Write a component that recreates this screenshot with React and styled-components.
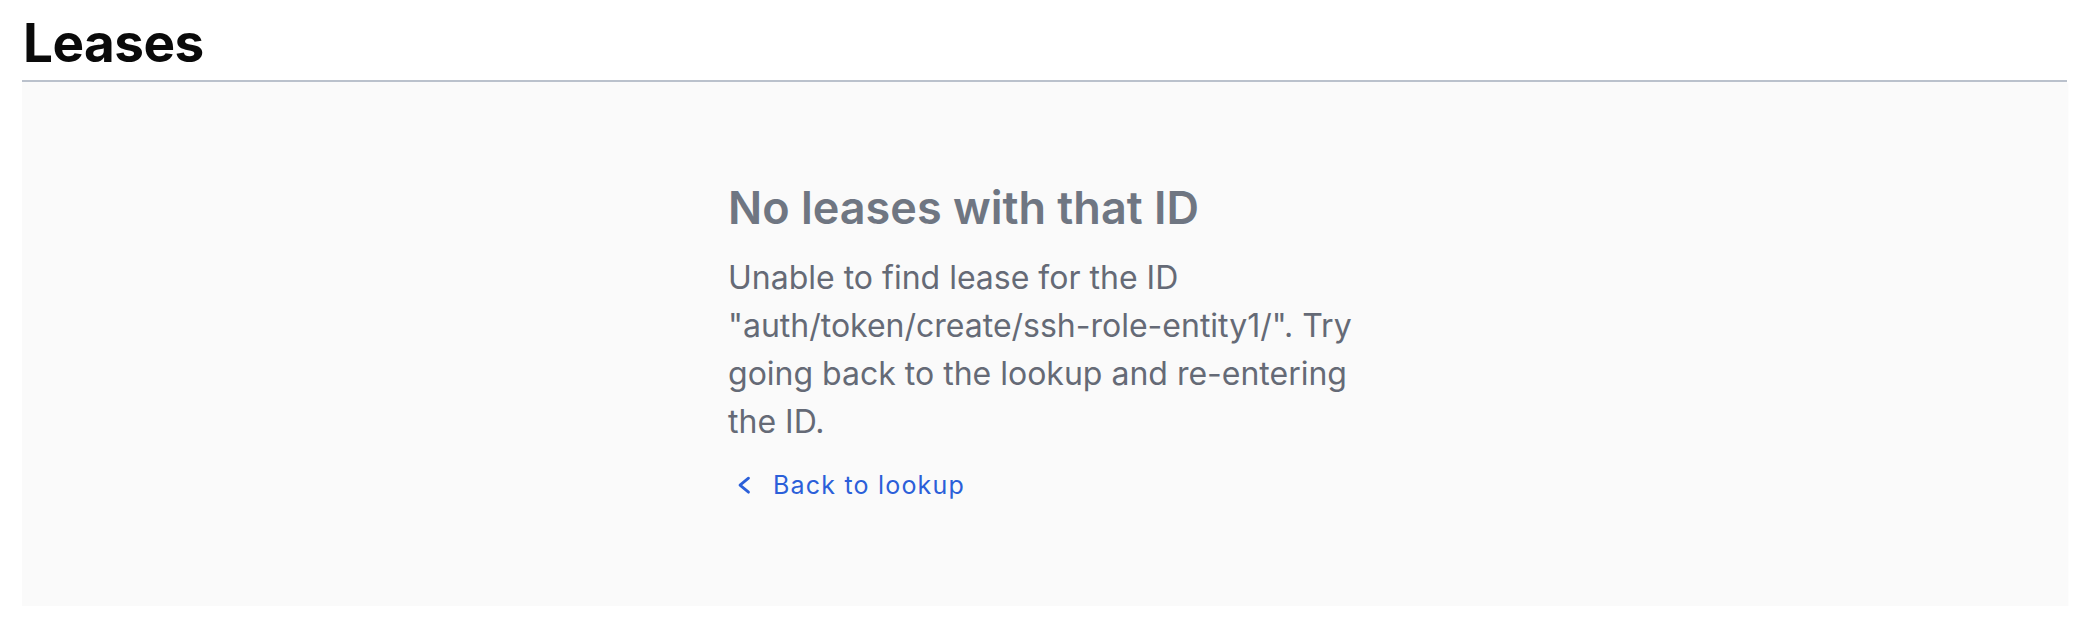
import React from 'react';
import styled, { createGlobalStyle } from 'styled-components';

const GlobalStyle = createGlobalStyle`
  body {
    margin: 0;
    background-color: #ffffff;
    font-family: Inter, 'Noto Sans', 'Liberation Sans', sans-serif;
  }
`;

const Page = styled.div`
  padding: 0 29px 0 22px;
`;

const Header = styled.header`
  padding-top: 11px;
  padding-bottom: 5px;
  border-bottom: 2px solid #bac1cc;
`;

const PageTitle = styled.h1`
  margin: 0;
  font-size: 53px;
  line-height: 64px;
  font-weight: 700;
  letter-spacing: -0.5px;
  color: #0a0a0a;
  padding-left: 1px;
`;

const EmptyPanel = styled.section`
  display: flex;
  justify-content: center;
  height: 524px;
  box-sizing: border-box;
  padding-top: 99px;
  background-color: #fafafa;
  box-shadow: 1px 1px 2px rgba(0, 0, 0, 0.03);
`;

const EmptyContent = styled.div`
  width: 633px;
`;

const EmptyTitle = styled.h2`
  margin: 0;
  font-size: 45px;
  line-height: 54px;
  font-weight: 600;
  color: #6f7682;
`;

const EmptyMessage = styled.p`
  margin: 19px 0 0;
  max-width: 650px;
  font-size: 32px;
  line-height: 48px;
  color: #656a76;
`;

const BackLink = styled.a`
  display: inline-flex;
  align-items: center;
  gap: 17px;
  margin-top: 23px;
  font-size: 25px;
  line-height: 32px;
  letter-spacing: 1.2px;
  color: #2b5fd9;
  text-decoration: none;
  cursor: pointer;

  svg {
    margin-left: 4px;
  }
`;

const ChevronLeft = () => (
  <svg width="24" height="24" viewBox="0 0 24 24" fill="none">
    <polyline
      points="16.5,5.2 8,12.2 16.5,19.2"
      stroke="currentColor"
      strokeWidth="2.8"
      strokeLinecap="round"
      strokeLinejoin="round"
    />
  </svg>
);

const App = () => {
  const leaseId = 'auth/token/create/ssh-role-entity1/';

  return (
    <>
      <GlobalStyle />
      <Page>
        <Header>
          <PageTitle>Leases</PageTitle>
        </Header>
        <EmptyPanel>
          <EmptyContent>
            <EmptyTitle>No leases with that ID</EmptyTitle>
            <EmptyMessage>
              Unable to find lease for the ID "{leaseId}". Try going back to the lookup and re-entering the ID.
            </EmptyMessage>
            <BackLink href="#">
              <ChevronLeft />
              Back to lookup
            </BackLink>
          </EmptyContent>
        </EmptyPanel>
      </Page>
    </>
  );
};

export default App;
